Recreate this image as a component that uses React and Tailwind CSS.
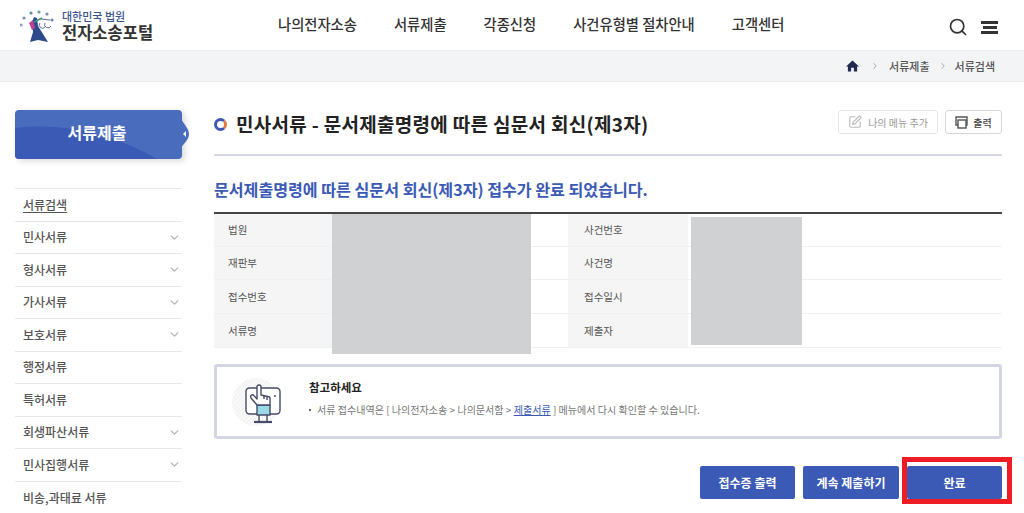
import React from "react";
import { ChevronDown, ChevronRight, Search, SquarePen } from "lucide-react";

const font = { fontFamily: '"Noto Sans CJK KR", "Noto Sans", sans-serif' };

function Logo() {
  return (
    <svg width="36" height="36" viewBox="0 0 36 36" className="shrink-0">
      <path d="M14 9 L17 10 L18 18 L28 34 L18 32 L10 34 L13 24 L12 14 Z" fill="#2c4a8c" />
      <path d="M9 15 L13 12 L15 20 L12 22 Z" fill="#c2408f" />
      <path d="M14 14 L22 10" stroke="#3a9a7b" strokeWidth="1.8" />
      <path d="M20 15 a3 3 0 0 0 5 4 M25 15 a3 3 0 0 0 6 3 M21 11 L30 12" stroke="#5b6f9f" strokeWidth="1" fill="none" />
      {[[1, 17, "#8ea0c6"], [4, 10, "#7a8db8"], [11, 5, "#5d8f9f"], [19, 4, "#6f9aa0"], [27, 6, "#7a8db8"], [32, 12, "#6f86b4"]].map(([x, y, c]) => (
        <circle key={x} cx={x} cy={y} r="1.6" fill={c} />
      ))}
    </svg>
  );
}

function HandIcon() {
  return (
    <svg width="50" height="50" viewBox="0 0 50 50" fill="none" className="shrink-0">
      <defs>
        <pattern id="hatch" width="3" height="3" patternUnits="userSpaceOnUse" patternTransform="rotate(-45)">
          <rect width="3" height="3" fill="#fbfbfb" />
          <rect width="3" height="1.2" fill="#f0f0f0" />
        </pattern>
      </defs>
      <circle cx="24" cy="25" r="24" fill="url(#hatch)" />
      <g stroke="#454b68" strokeWidth="1.4" strokeLinejoin="round">
        <rect x="14" y="11" width="34" height="26" rx="3.5" fill="#fff" />
        <rect x="25" y="28" width="13" height="10" fill="#9bd8e8" />
        <path d="M25 28 L19 21 a1.8 1.8 0 0 1 3 -2.4 L25 22 V10 a2 2 0 0 1 4 0 V18 L36 19.5 a2 2 0 0 1 2 2 V28 Z" fill="#fff" />
        <path d="M32 19 V22 M35 20 V23" />
        <path d="M27 38 V44 M35 38 V44" />
        <path d="M22 45 H40" strokeWidth="2.2" />
      </g>
      <circle cx="43" cy="19" r="1" fill="#454b68" />
    </svg>
  );
}

const menu = [
  ["민사서류", 1], ["형사서류", 1], ["가사서류", 1], ["보호서류", 1], ["행정서류", 0],
  ["특허서류", 0], ["회생파산서류", 1], ["민사집행서류", 1], ["비송,과태료 서류", 0],
];

const rows = [
  ["법원", "사건번호", "h-[33px]"],
  ["재판부", "사건명", "h-[33px]"],
  ["접수번호", "접수일시", "h-[34px]"],
  ["서류명", "제출자", "h-[34px]"],
];

export default function App() {
  return (
    <div className="w-[1024px] h-[513px] overflow-hidden bg-white text-[#333]" style={font}>
      <header className="h-[50px] flex items-center relative">
        <div className="w-[240px] pl-[20px] flex items-center gap-[6px] pt-[1px]">
          <Logo />
          <div className="flex flex-col gap-[1px]">
            <span className="text-[11px] font-medium text-[#3c5390] leading-[12px]">대한민국 법원</span>
            <span className="text-[16.5px] font-bold text-[#333] leading-[19px]">전자소송포털</span>
          </div>
        </div>
        <nav className="flex items-center text-[14.3px] font-medium text-[#333] ml-[38px] gap-[37px] -mt-[3px]">
          <span>나의전자소송</span>
          <span>서류제출</span>
          <span>각종신청</span>
          <span>사건유형별 절차안내</span>
          <span>고객센터</span>
        </nav>
        <div className="ml-auto flex items-center gap-[13px] pr-[26px] pt-[4px]">
          <Search size={20} strokeWidth={2} className="text-[#333]" />
          <div className="w-[17px] h-[13px] flex flex-col justify-between items-center">
            <div className="h-[3px] w-full bg-[#333]" />
            <div className="h-[3px] w-[14px] bg-[#333]" />
            <div className="h-[3px] w-full bg-[#333]" />
          </div>
        </div>
      </header>

      <div className="h-[32px] bg-[#f3f4f6] border-y border-[#e9ebef] flex items-center justify-end pr-[29px] text-[11px] text-[#555] font-medium">
        <svg width="13" height="12" viewBox="0 0 14 13" className="mr-[11px]">
          <path d="M7 0.5 L14 7 H12 V12.5 H8.5 V8.5 H5.5 V12.5 H2 V7 H0 Z" fill="#1f2a52" />
        </svg>
        <ChevronRight size={10} className="text-[#999] mr-[9px]" />
        <span>서류제출</span>
        <ChevronRight size={10} className="text-[#999] ml-[8px] mr-[7px]" />
        <span>서류검색</span>
      </div>

      <div className="flex pl-[15px] pt-[28px]">
        <aside className="w-[167px] shrink-0">
          <div className="relative h-[49px] rounded-[4px] bg-[#4a6cbd] flex items-center justify-center shadow-[3px_2px_6px_rgba(0,0,0,0.15)]">
            <svg width="175" height="49" viewBox="0 0 175 49" className="absolute left-0 top-0 overflow-visible">
              <path d="M0 18 C50 12 100 25 142 49 H4 Q0 49 0 45 Z" fill="#3a5ab6" />
              <path d="M166 8 C168 14 174 18 174 24 C174 30 168 34 166 38 Z" fill="#4a6cbd" />
              <path d="M171 21 V27 L168 24 Z" fill="#fff" />
            </svg>
            <span className="relative text-[16px] font-bold text-white pr-[3px] -mt-[6px]">서류제출</span>
          </div>
          <ul className="mt-[29px] border-t border-[#e8e8e8] text-[12px] font-medium text-[#555]">
            <li className="h-[32.5px] flex items-center pl-[8px] border-b border-[#e8e8e8]">
              <span className="underline underline-offset-2">서류검색</span>
            </li>
            {menu.map(([t, c]) => (
              <li key={t} className="h-[32.5px] flex items-center justify-between pl-[8px] pr-[1px] border-b border-[#e8e8e8] last:border-b-0">
                <span>{t}</span>
                {c ? <ChevronDown size={13} strokeWidth={2.4} className="text-[#b5b5b5]" /> : null}
              </li>
            ))}
          </ul>
        </aside>

        <main className="w-[788px] ml-[32px]">
          <div className="h-[46px] flex items-start justify-between border-b-2 border-[#d3d7e2]">
            <div className="flex items-center gap-[9px] h-[28px]">
              <div className="w-[13px] h-[13px] rounded-full border-[3px] border-[#3a5ab6] border-r-[#e07a3e]" />
              <h1 className="text-[19px] font-bold text-[#222] tracking-[0.3px] leading-[28px]">민사서류 - 문서제출명령에 따른 심문서 회신(제3자)</h1>
            </div>
            <div className="flex items-center gap-[7px]">
              <div className="h-[24px] w-[100px] rounded-[3px] border border-[#e6e6e6] flex items-center justify-center gap-[6px] text-[10px] text-[#999]">
                <SquarePen size={14} className="text-[#bbb]" />
                <span>나의 메뉴 추가</span>
              </div>
              <div className="h-[24px] w-[57px] rounded-[3px] border border-[#d6d6d6] flex items-center justify-center gap-[5px] text-[10px] font-medium text-[#444]">
                <svg width="13" height="13" viewBox="0 0 13 13" fill="none" stroke="#555" strokeWidth="1.4">
                  <path d="M3 9 H1 V1 H12 V9 H10" />
                  <rect x="3" y="4" width="8" height="8" fill="#fff" />
                </svg>
                <span>출력</span>
              </div>
            </div>
          </div>

          <p className="text-[16.1px] font-bold text-[#3a5ab6] mt-[22px] leading-[22px]">
            문서제출명령에 따른 심문서 회신(제3자) 접수가 완료 되었습니다.
          </p>

          <div className="relative mt-[12px] border-t-2 border-[#444] text-[10.5px] text-[#555]">
            {rows.map(([a, b, h]) => (
              <div key={a} className={`${h} flex border-b border-[#f0f0f0]`}>
                <div className="w-[118px] bg-[#f5f5f5] pl-[14px] flex items-center">{a}</div>
                <div className="w-[236px]" />
                <div className="w-[120px] bg-[#f5f5f5] pl-[16px] flex items-center">{b}</div>
                <div className="flex-1" />
              </div>
            ))}
            <div className="absolute left-[118px] top-0 w-[199px] h-[140px] bg-[#d0d1d3]" />
            <div className="absolute left-[477px] top-[3px] w-[111px] h-[128px] bg-[#d0d1d3]" />
          </div>

          <div className="mt-[16px] h-[75px] rounded-[3px] border-[3px] border-[#d3d7e2] flex items-center pl-[15px]">
            <HandIcon />
            <div className="ml-[27px]">
              <p className="text-[11.5px] font-bold text-[#222] leading-[16px] -mt-[7px]">참고하세요</p>
              <p className="text-[10.05px] text-[#777] leading-[14px] mt-[8px] flex items-center">
                <span className="w-[2px] h-[2px] bg-[#666] mr-[6px]" />
                <span>
                  서류 접수내역은 [ 나의전자소송 &gt; 나의문서함 &gt; <span className="text-[#3a5ab6] underline">제출서류</span> ] 메뉴에서 다시 확인할 수 있습니다.
                </span>
              </p>
            </div>
          </div>

          <div className="flex justify-end gap-[8px] mt-[27px] text-[12px] font-bold text-white">
            <div className="w-[95px] h-[33px] rounded-[2px] bg-[#3a5ab6] flex items-center justify-center">접수증 출력</div>
            <div className="w-[96px] h-[33px] rounded-[2px] bg-[#3a5ab6] flex items-center justify-center">계속 제출하기</div>
            <div className="relative w-[95px] h-[33px] rounded-[2px] bg-[#3a5ab6] flex items-center justify-center">
              완료
              <div className="absolute -left-[5px] -top-[9px] w-[110px] h-[47px] border-[5px] border-[#ee1c25]" />
            </div>
          </div>
        </main>
      </div>
    </div>
  );
}
